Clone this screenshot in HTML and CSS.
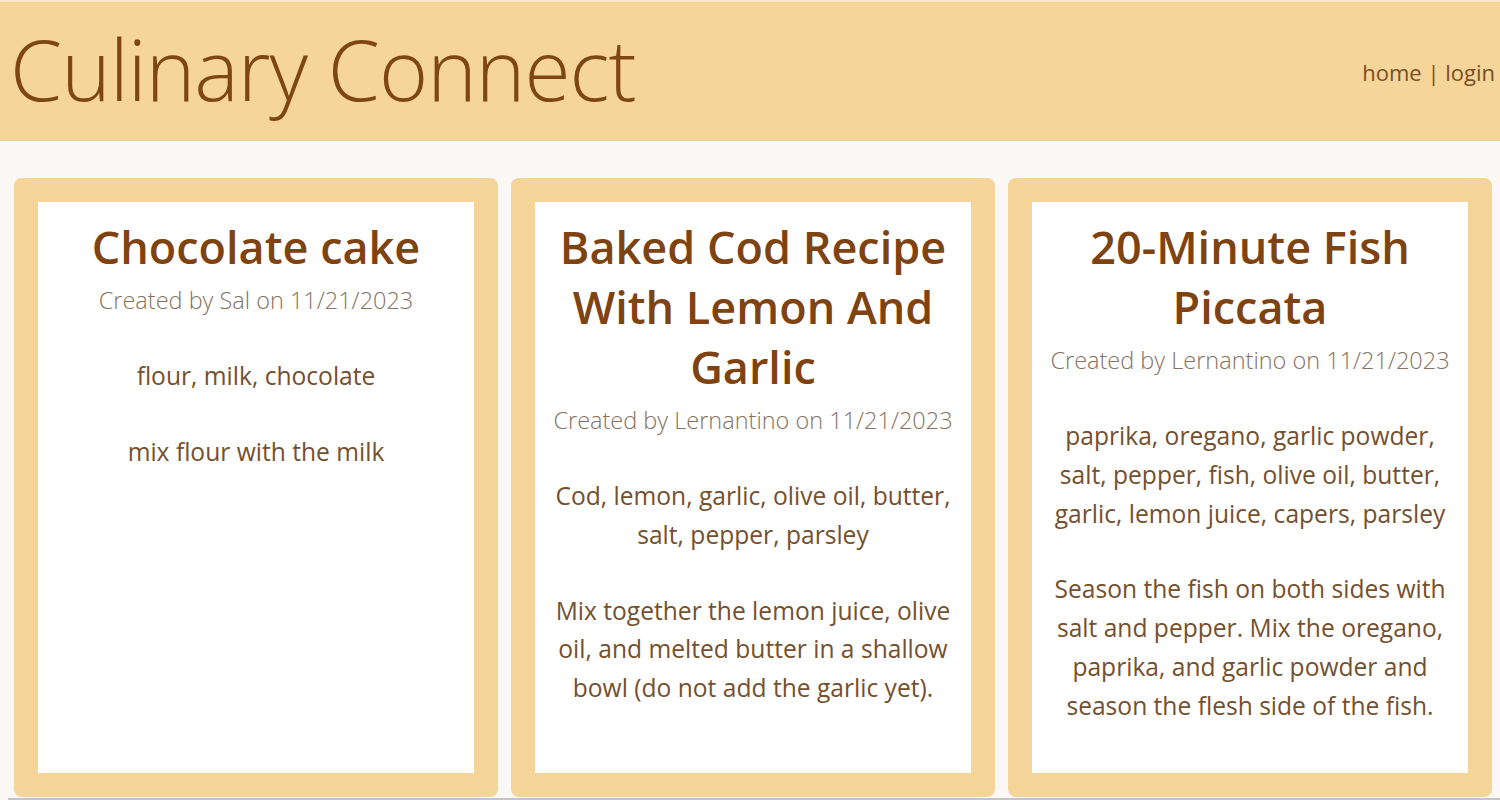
FILE: index.html
```html
<!DOCTYPE html>
<html lang="en">
<head>
<meta charset="utf-8">
<title>Culinary Connect</title>
<link rel="stylesheet" href="styles.css">
</head>
<body>
<header class="site-header">
  <h1 class="brand">Culinary Connect</h1>
  <nav class="nav"><a href="#">home</a> | <a href="#">login</a></nav>
</header>
<main class="recipes">
  <article class="card">
    <div class="card-inner">
      <h2 class="card-title">Chocolate cake</h2>
      <p class="meta">Created by Sal on 11/21/2023</p>
      <p class="text">flour, milk, chocolate</p>
      <p class="text">mix flour with the milk</p>
    </div>
  </article>
  <article class="card">
    <div class="card-inner">
      <h2 class="card-title">Baked Cod Recipe With Lemon And Garlic</h2>
      <p class="meta">Created by Lernantino on 11/21/2023</p>
      <p class="text">Cod, lemon, garlic, olive oil, butter, salt, pepper, parsley</p>
      <p class="text">Mix together the lemon juice, olive oil, and melted butter in a shallow bowl (do not add the garlic yet).</p>
    </div>
  </article>
  <article class="card">
    <div class="card-inner">
      <h2 class="card-title">20-Minute Fish Piccata</h2>
      <p class="meta">Created by Lernantino on 11/21/2023</p>
      <p class="text">paprika, oregano, garlic powder, salt, pepper, fish, olive oil, butter, garlic, lemon juice, capers, parsley</p>
      <p class="text">Season the fish on both sides with salt and pepper. Mix the oregano, paprika, and garlic powder and season the flesh side of the fish.</p>
    </div>
  </article>
</main>
<div class="scroll-track"></div>
</body>
</html>
```

FILE: styles.css
```css
html, body {
  margin: 0;
  padding: 0;
}
body {
  background: #faf8f4;
  font-family: "Open Sans", "Noto Sans", sans-serif;
  color: #7e4612;
  overflow: hidden;
  height: 800px;
}
.site-header {
  background: #f5d59a;
  border-top: 2px solid #f8e8c8;
  border-bottom: 1px solid #e6cda2;
  height: 138px;
  display: flex;
  align-items: center;
  justify-content: space-between;
  padding: 0 5px 0 10px;
}
.brand {
  margin: 0;
  font-weight: 300;
  font-size: 84px;
  letter-spacing: -1px;
  color: #7e4612;
  line-height: 1;
  padding-bottom: 4px;
}
.nav {
  font-size: 22px;
  color: #7a4f22;
  padding-top: 2px;
}
.nav a {
  color: #7a4f22;
  text-decoration: none;
}
.recipes {
  display: grid;
  grid-template-columns: repeat(3, 1fr);
  gap: 13px;
  padding: 37px 8px 0 14px;
}
.card {
  background: #f4d499;
  border-radius: 8px;
  padding: 24px;
  height: 571px;
}
.card-inner {
  background: #ffffff;
  height: 100%;
  padding: 15px 12px 0;
  box-sizing: border-box;
  text-align: center;
}
.card-title {
  margin: 0;
  font-size: 45px;
  font-weight: 600;
  line-height: 60px;
  color: #7e4310;
}
.meta {
  margin: 0;
  font-size: 23.5px;
  font-weight: 300;
  line-height: 46px;
  color: #85725f;
}
.text {
  margin: 37px 0 0;
  font-size: 24.6px;
  line-height: 38.8px;
  color: #74502e;
}
.meta + .text {
  margin-top: 34px;
}
.scroll-track {
  height: 3px;
  margin: 1px 0 0 8px;
  width: 1500px;
  background: #c4c4c4;
}
```
